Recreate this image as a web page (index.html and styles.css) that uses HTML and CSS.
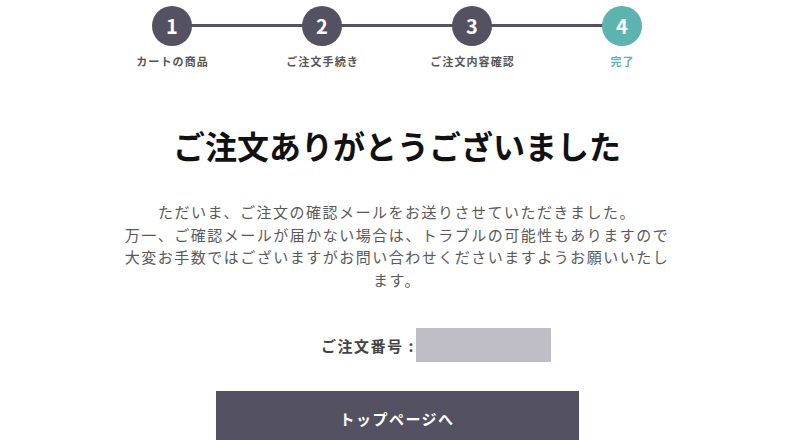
FILE: index.html
```html
<!DOCTYPE html>
<html lang="ja">
<head>
<meta charset="utf-8">
<title>ご注文完了</title>
<link rel="stylesheet" href="styles.css">
</head>
<body>
<main class="page">
  <ol class="steps">
    <li class="step"><span class="step-num">1</span><span class="step-label">カートの商品</span></li>
    <li class="step"><span class="step-num">2</span><span class="step-label">ご注文手続き</span></li>
    <li class="step"><span class="step-num">3</span><span class="step-label">ご注文内容確認</span></li>
    <li class="step step-current"><span class="step-num">4</span><span class="step-label">完了</span></li>
  </ol>

  <h1 class="title">ご注文ありがとうございました</h1>

  <p class="message">ただいま、ご注文の確認メールをお送りさせていただきました。<br>万一、ご確認メールが届かない場合は、トラブルの可能性もありますので大変お手数ではございますがお問い合わせくださいますようお願いいたします。</p>

  <div class="order">
    <span class="order-label">ご注文番号 :</span>
    <span class="order-value"></span>
  </div>

  <div class="actions">
    <a class="btn" href="#">トップページへ</a>
  </div>
</main>
</body>
</html>
```

FILE: styles.css
```css
html, body {
  margin: 0;
  padding: 0;
  overflow: hidden;
  background: #ffffff;
}

body {
  font-family: "Noto Sans CJK JP", "Noto Sans", sans-serif;
  color: #555555;
  padding-right: 6px;
}

.page {
  width: 600px;
  margin: 0 auto;
  display: flex;
  flex-direction: column;
  align-items: center;
}

.steps {
  list-style: none;
  margin: 0;
  padding: 6px 0 0;
  display: flex;
  width: 600px;
}

.step {
  position: relative;
  width: 150px;
  display: flex;
  flex-direction: column;
  align-items: center;
}

.step + .step::before {
  content: "";
  position: absolute;
  top: 18px;
  left: -75px;
  width: 150px;
  height: 3px;
  background: #545163;
  z-index: 0;
}

.step-num {
  position: relative;
  z-index: 1;
  width: 40px;
  height: 40px;
  border-radius: 50%;
  background: #545163;
  color: #ffffff;
  font-size: 20px;
  font-weight: 700;
  line-height: 40px;
  text-align: center;
}

.step-current .step-num {
  background: #5db3b0;
}

.step-label {
  margin-top: 7px;
  font-size: 11px;
  line-height: 16px;
  font-weight: 700;
  color: #555555;
  letter-spacing: 0.1em;
  padding-left: 0.1em;
}

.step-current .step-label {
  color: #5db3b0;
}

.title {
  margin: 52px 0 0;
  font-size: 32px;
  line-height: 48px;
  font-weight: 700;
  color: #111111;
  text-align: center;
}

.message {
  margin: 32px 0 0;
  width: 550px;
  font-size: 15px;
  line-height: 22.5px;
  letter-spacing: 0.1em;
  text-align: center;
  color: #595959;
}

.order {
  margin-top: 37px;
  display: flex;
  align-items: center;
  justify-content: center;
  padding-left: 78px;
}

.order-label {
  font-size: 15px;
  font-weight: 700;
  letter-spacing: 0.1em;
  color: #444444;
}

.order-value {
  margin-left: 1px;
  width: 135px;
  height: 34px;
  background: #bfbec6;
}

.actions {
  margin-top: 29px;
}

.btn {
  display: block;
  width: 363px;
  box-sizing: border-box;
  padding: 17px 0;
  background: #545163;
  color: #ffffff;
  font-size: 15px;
  line-height: 22px;
  font-weight: 700;
  letter-spacing: 0.1em;
  text-align: center;
  text-decoration: none;
}
```
